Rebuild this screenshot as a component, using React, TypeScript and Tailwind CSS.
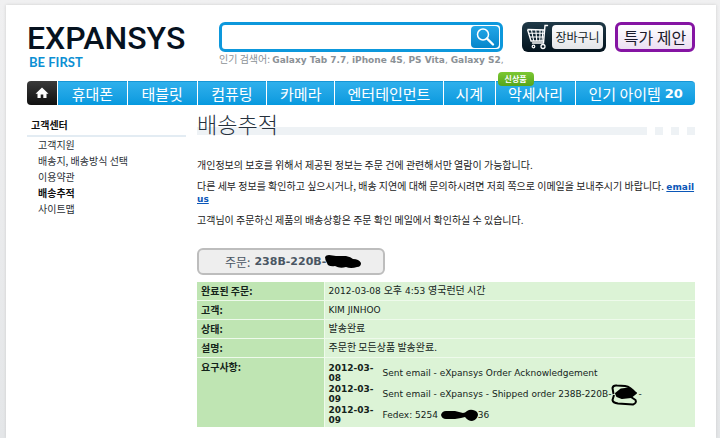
import { Fragment, type ReactNode } from "react";

const KR = "font-['Noto_Sans_CJK_KR',sans-serif]";
const LATIN = "font-['DejaVu_Sans','Noto_Sans_CJK_KR',sans-serif]";

const navItems = [
  { label: "휴대폰" },
  { label: "태블릿" },
  { label: "컴퓨팅" },
  { label: "카메라" },
  { label: "엔터테인먼트" },
  { label: "시계" },
  { label: "악세사리", badge: "신상품" },
  { label: "인기 아이템", count: "20" },
];

const sideLinks = [
  { label: "고객지원" },
  { label: "배송지, 배송방식 선택" },
  { label: "이용약관" },
  { label: "배송추적", active: true },
  { label: "사이트맵" },
];

const popular = ["Galaxy Tab 7.7", "iPhone 4S", "PS Vita", "Galaxy S2"];

function CartIcon() {
  return (
    <svg viewBox="0 0 24 26" className="h-[26px] w-6 shrink-0" fill="none" stroke="#fff" aria-hidden="true">
      <path d="M21.500 1.500h-2.500l-1.500 17.500H6.500" strokeWidth="1.400" strokeLinecap="round" />
      <path d="M1.500 5.500l17 .5M1.500 5.500l3.500 11.500h12.500" strokeWidth="1.300" />
      <path d="M2.800 9.300h15.600M4 13h14M5.500 6l2.200 11M9.800 6l1 11M14 6l-.2 11M17 6l-1 11" strokeWidth="1.100" />
      <circle cx="7.500" cy="22.500" r="1.300" strokeWidth="1.200" />
      <circle cx="17" cy="22.500" r="2" strokeWidth="1.300" />
    </svg>
  );
}

function SearchIcon() {
  return (
    <svg viewBox="0 0 20 20" className="h-5 w-5" fill="none" stroke="#fff" aria-hidden="true">
      <circle cx="8" cy="7.500" r="5.500" strokeWidth="1.500" />
      <path d="M12 11.500l6 6" strokeWidth="2.400" strokeLinecap="round" />
    </svg>
  );
}

function HomeIcon() {
  return (
    <svg viewBox="0 0 14 12" className="h-3 w-3.5" fill="#fff" aria-hidden="true">
      <path d="M7 .5L.5 6.800h2V11h3.200V7.500h2.600V11h3.200V6.800h2z" />
    </svg>
  );
}

function Header() {
  return (
    <header className="flex items-start">
      <a href="#" className="mt-1 block w-[192px] shrink-0">
        <span className="block font-['Roboto',sans-serif] text-[32px] leading-6 font-medium text-[#06121f]">
          EXPANSYS
        </span>
        <span className="mt-1 block pl-0.5 font-['Lato',sans-serif] text-[13px] leading-4 font-bold text-[#0c8fd3]">
          BE FIRST
        </span>
      </a>
      <div className="min-w-0 flex-1">
        <form className="flex h-[30px] rounded-md border-[3px] border-[#0d98dc] bg-white p-px">
          <input type="text" aria-label="검색" className="min-w-0 flex-1 bg-transparent px-2 text-xs outline-none" />
          <button
            type="button"
            aria-label="찾기"
            className="flex w-7 items-center justify-center rounded-sm bg-linear-to-b from-[#22a7e8] to-[#0586cb]"
          >
            <SearchIcon />
          </button>
        </form>
        <p className={`${KR} text-[10px] leading-3.5 whitespace-nowrap text-[#8b9196]`}>
          인기 검색어:{" "}
          <span className="font-['DejaVu_Sans',sans-serif] text-[9px] leading-none">
            {popular.map((term) => (
              <Fragment key={term}>
                <a href="#" className="font-bold">{term}</a>,{" "}
              </Fragment>
            ))}
          </span>
        </p>
      </div>
      <button
        type="button"
        className="ml-[19px] flex h-[30px] w-[84px] shrink-0 items-center rounded-md bg-linear-to-b from-[#203a48] to-[#04131d] pr-[3px] pl-1"
      >
        <CartIcon />
        <span
          className={`${KR} ml-0.5 flex h-6 flex-1 items-center justify-center rounded-sm bg-linear-to-b from-white to-[#e3e5e8] text-xs whitespace-nowrap text-[#101c26]`}
        >
          장바구니
        </span>
      </button>
      <button
        type="button"
        className={`${KR} ml-[9px] flex h-[30px] w-20 shrink-0 items-center justify-center rounded-md border-[3px] border-[#8514a3] bg-linear-to-b from-white to-[#ecdff2] text-base whitespace-nowrap text-[#1b1a2b]`}
      >
        특가 제안
      </button>
    </header>
  );
}

function Nav() {
  return (
    <nav
      className={`${KR} mt-[11px] grid h-6 grid-cols-[30px_69fr_69fr_69fr_67fr_108fr_51fr_80fr_119fr] gap-px text-[15px] text-white`}
    >
      <a
        href="#"
        aria-label="홈"
        className="flex items-center justify-center rounded-l-sm bg-linear-to-b from-[#3b3b3b] to-[#111]"
      >
        <HomeIcon />
      </a>
      {navItems.map((item) => (
        <a
          key={item.label}
          href="#"
          className="relative flex items-center justify-center border-t border-[#1696d6] bg-linear-to-b from-[#2eb0ec] to-[#0599de] leading-5 whitespace-nowrap last:rounded-r-sm"
        >
          {item.label}
          {item.count && (
            <span className="ml-1 font-['DejaVu_Sans',sans-serif] text-[13px] font-bold">{item.count}</span>
          )}
          {item.badge && (
            <span className="absolute -top-2.5 left-0.5 flex h-3.5 w-9 items-center justify-center rounded-sm bg-linear-to-b from-[#7cc832] to-[#55a51b] text-[8px] leading-none font-bold">
              {item.badge}
            </span>
          )}
        </a>
      ))}
    </nav>
  );
}

function Sidebar() {
  return (
    <aside className={`${KR} w-[159px] shrink-0 pt-3 text-[10px] leading-4 text-[#2b3036]`}>
      <h2 className="border-b-2 border-[#e3ecf3] pb-0.5 pl-1 font-bold text-[#111]">고객센터</h2>
      <ul className="pl-[11px]">
        {sideLinks.map((link) => (
          <li key={link.label}>
            <a href="#" className={link.active ? "font-bold text-[#111]" : ""}>
              {link.label}
            </a>
          </li>
        ))}
      </ul>
    </aside>
  );
}

function Row({ label, children }: { label: string; children: ReactNode }) {
  return (
    <tr className="border-b border-[#eefaeb] last:border-b-0">
      <th
        scope="row"
        className={`${KR} w-[127px] bg-[#bfe5b3] px-1 py-px text-left align-top text-[10px] leading-4 font-bold`}
      >
        {label}
      </th>
      <td className="border-l border-[#eefaeb] bg-[#dcf3d6] px-1 py-px align-top text-[9px] leading-4">{children}</td>
    </tr>
  );
}

function Korean({ children }: { children: ReactNode }) {
  return <span className={`${KR} text-[10px] leading-none`}>{children}</span>;
}

function Event({ date, children }: { date: string; children: ReactNode }) {
  return (
    <tr>
      <th scope="row" className="w-[54px] pt-px pr-1 text-left align-top leading-[10px] font-bold">
        {date}
      </th>
      <td className="pt-px align-middle leading-[10px] whitespace-nowrap">{children}</td>
    </tr>
  );
}

function OrderTable() {
  return (
    <table className={`${LATIN} mt-[7px] w-full border-collapse text-[#14231a]`}>
      <tbody>
        <Row label="완료된 주문:">
          2012-03-08 <Korean>오후</Korean> 4:53 <Korean>영국런던 시간</Korean>
        </Row>
        <Row label="고객:">KIM JINHOO</Row>
        <Row label="상태:">
          <Korean>발송완료</Korean>
        </Row>
        <Row label="설명:">
          <Korean>주문한 모든상품 발송완료.</Korean>
        </Row>
        <Row label="요구사항:">
          <table className="mt-[3px] mb-px w-full border-collapse">
            <tbody>
              <Event date="2012-03-08">Sent email - eXpansys Order Acknowledgement</Event>
              <Event date="2012-03-09">
                Sent email - eXpansys - Shipped order 238B-220B-
                <svg
                  viewBox="0 0 27 10"
                  className="inline-block h-2.5 w-[27px] overflow-visible align-middle"
                  fill="none"
                  stroke="#000"
                  aria-hidden="true"
                >
                  <path d="M2.500 5L1.500-1Q2-4 6-3.500L14-3Q20-2 24 4" strokeWidth="2" strokeLinejoin="round" />
                  <path d="M5 4.500l5-4 8-1 7 4.500-5 4-9 1-5-2z" fill="#000" strokeWidth="2" strokeLinejoin="round" />
                  <path
                    d="M3 6l-1.500 5Q2 14 7 14.500L22 15.500Q26 14 24.500 11L20 8"
                    strokeWidth="2"
                    strokeLinejoin="round"
                  />
                </svg>
                -
              </Event>
              <Event date="2012-03-09">
                Fedex: 5254{" "}
                <svg
                  viewBox="0 0 37 10"
                  className="inline-block h-2.5 w-[37px] overflow-visible align-middle"
                  aria-hidden="true"
                >
                  <path d="M0 5Q1 1 5 1h9l8 2q2 0 4-2 3-2 6-1 5 1 5 5-1 5-6 6-4 0-7-4l-4 1-6 1H5Q1 9 0 5z" />
                </svg>
                36
              </Event>
            </tbody>
          </table>
        </Row>
      </tbody>
    </table>
  );
}

function Main() {
  return (
    <main className="min-w-0 flex-1 pt-1.5">
      <div className="grid">
        <div className="col-start-1 row-start-1 flex items-end gap-2">
          <span className="h-2 flex-1 bg-[#eef2f5]" />
          <span className="h-2 w-2 bg-[#eef2f5]" />
          <span className="h-2 w-2 bg-[#eef2f5]" />
          <span className="h-2 w-2 bg-[#eef2f5]" />
        </div>
        <h1 className={`${KR} col-start-1 row-start-1 text-[22px] leading-6 font-light text-[#26313d]`}>배송추적</h1>
      </div>
      <div className={`${KR} mt-6 space-y-2.5 text-[10px] leading-[11px] text-[#222]`}>
        <p>개인정보의 보호를 위해서 제공된 정보는 주문 건에 관련해서만 열람이 가능합니다.</p>
        <p>
          다른 세부 정보를 확인하고 싶으시거나, 배송 지연에 대해 문의하시려면 저희 쪽으로 이메일을 보내주시기
          바랍니다.{" "}
          <a
            href="#"
            className="font-['DejaVu_Sans',sans-serif] text-[9px] leading-[9px] font-bold text-[#0b57b8] underline"
          >
            email us
          </a>
        </p>
        <p>고객님이 주문하신 제품의 배송상황은 주문 확인 메일에서 확인하실 수 있습니다.</p>
      </div>
      <div
        className={`${LATIN} mt-[23px] flex h-[27px] w-[188px] items-center rounded-md border-2 border-[#bdbdbd] bg-[#eee] pl-[26px] text-[11px] leading-4 font-bold whitespace-nowrap text-[#4a5663]`}
      >
        <span className={`${KR} mr-1 text-xs leading-4 font-normal`}>주문:</span>238B-220B-
        <svg viewBox="0 0 36 14" className="-ml-px h-3.5 w-9" aria-hidden="true">
          <path d="M0 2Q1 0 4 0l7 1 10 0q5 1 7 3 6 0 8 4 0 4-4 4-6 2-11 0-6 2-11-1Q3 12 2 8 0 5 0 2z" />
        </svg>
      </div>
      <OrderTable />
    </main>
  );
}

export default function App() {
  return (
    <div className="min-h-screen bg-linear-to-b from-[#f0f0f1] to-[#e4e6e8] pt-[5px] pr-1 pl-1.5">
      <div className="min-h-[calc(100vh-5px)] bg-white px-[21px] pt-[17px] shadow-[0_0_3px_#ccc]">
        <Header />
        <Nav />
        <div className="flex gap-[11px]">
          <Sidebar />
          <Main />
        </div>
      </div>
    </div>
  );
}
